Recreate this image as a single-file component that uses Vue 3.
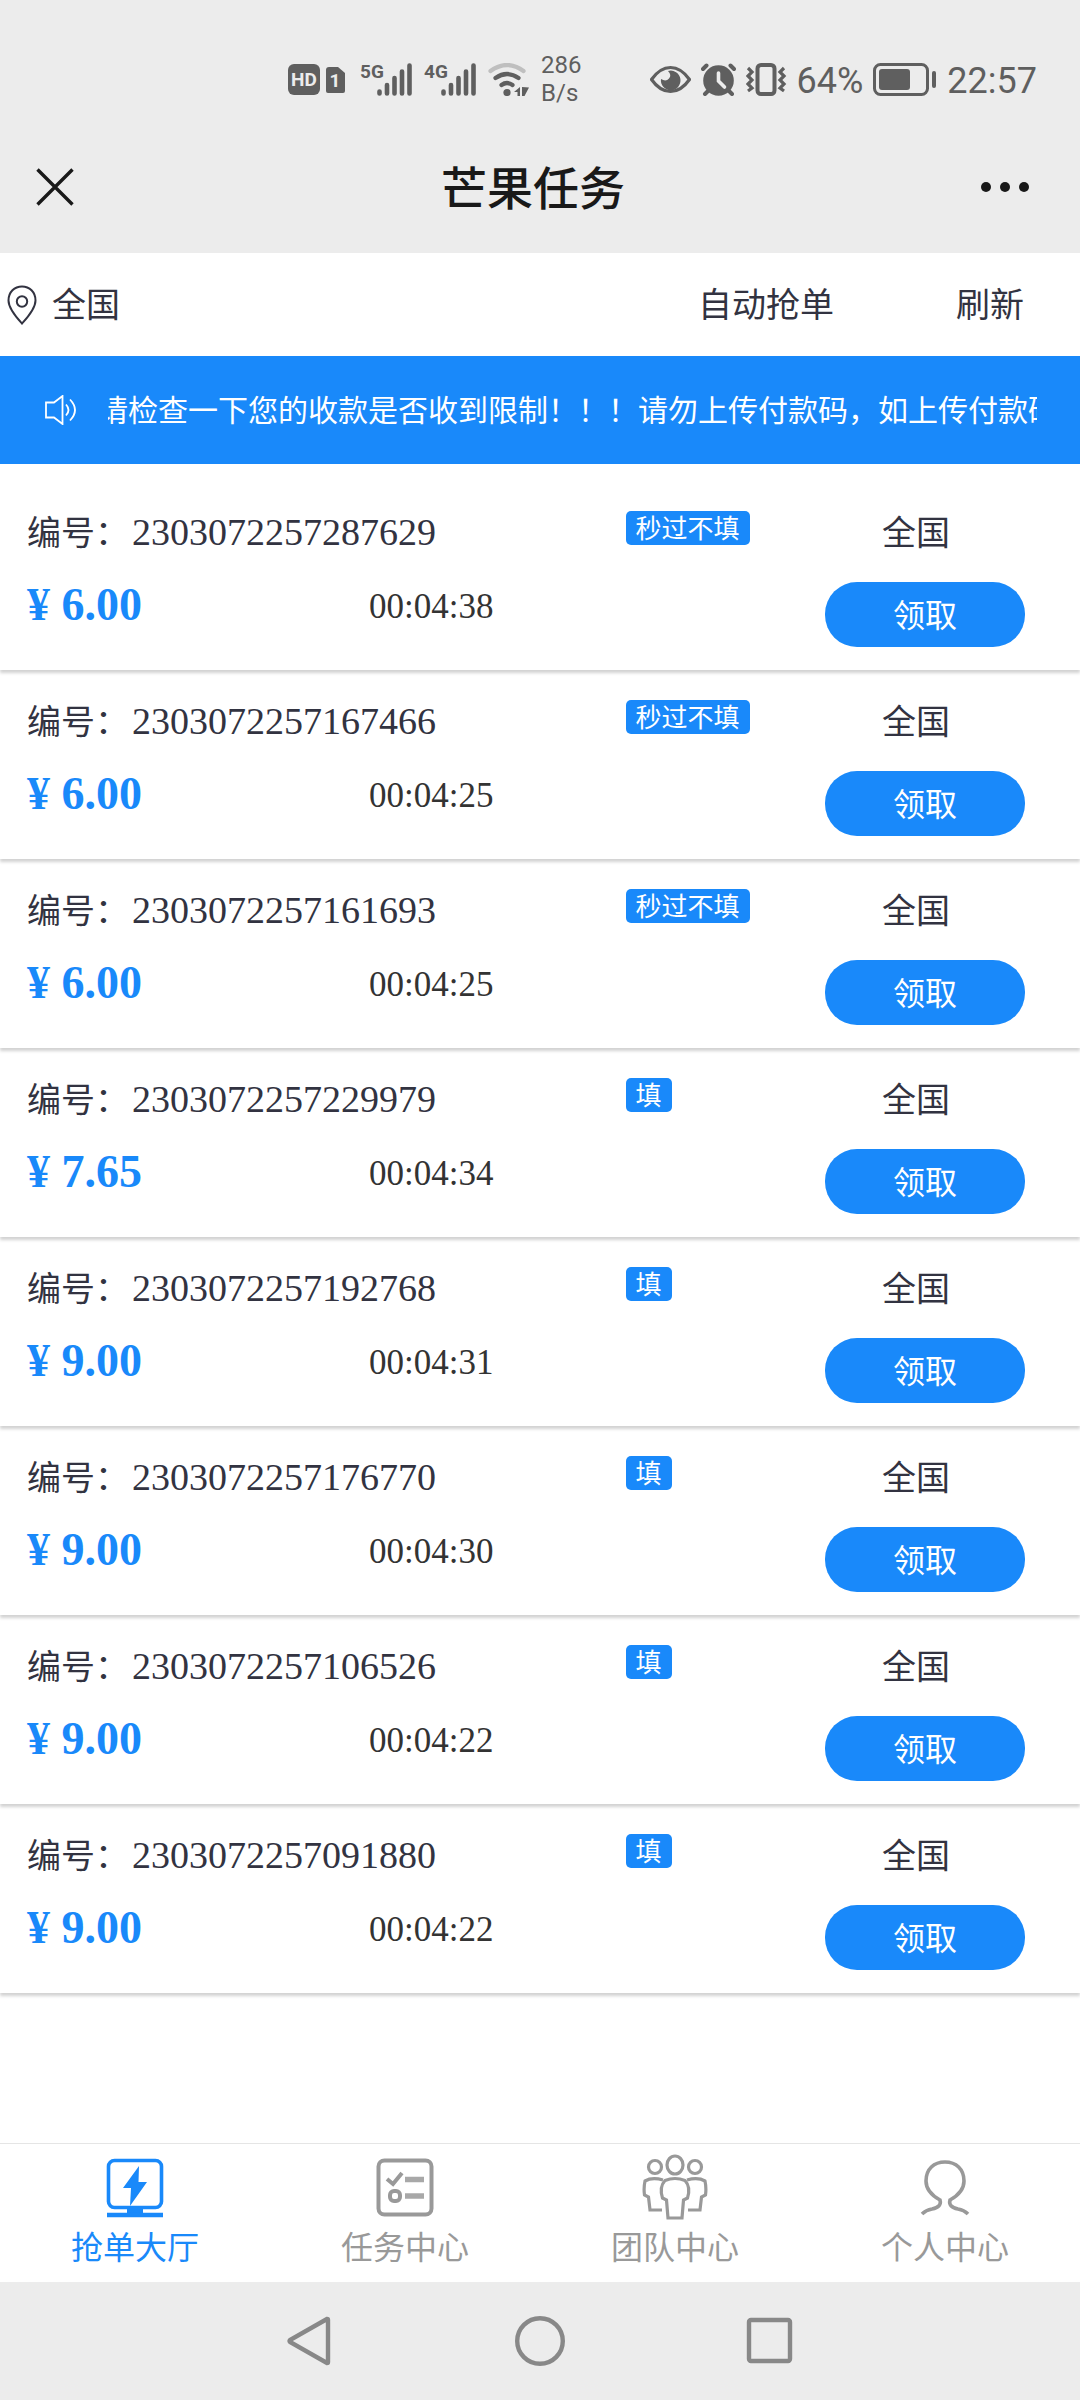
<template>
  <div class="page">
    <div class="status-bar">
      <div class="status-group">
        <svg width="60" height="33" viewBox="0 0 60 33">
          <rect x="0" y="1" width="32" height="31" rx="6" fill="#5f5f5f" />
          <text x="16" y="23" text-anchor="middle" class="hd-text">HD</text>
          <path d="M41 4h9l7 6v18q0 2-2 2H40q-2 0-2-2V7q0-3 3-3z" fill="#5f5f5f" />
          <text x="47" y="24" text-anchor="middle" class="hd-text">1</text>
        </svg>
        <svg v-for="net in ['5G', '4G']" :key="net" width="52" height="41" viewBox="0 -4 52 41">
          <text x="0" y="15" class="net-text">{{ net }}</text>
          <path d="M19.500 28.500v2M27 22v8.500M34.500 15v15.500M42 8.500v22M49.500 2.500v28" stroke="#5f5f5f" stroke-width="4.600" stroke-linecap="round" />
        </svg>
        <svg width="41" height="33" viewBox="0 0 41 33" fill="none" stroke-width="4.200" stroke-linecap="round">
          <path d="M2.500 8Q19 -4 35.500 8" stroke="#bfbfbf" />
          <path d="M7.500 15Q19 7 30.500 15" stroke="#5f5f5f" />
          <path d="M13.500 22Q19 18 24.500 22" stroke="#5f5f5f" />
          <circle cx="19" cy="29.500" r="3.600" fill="#5f5f5f" />
          <path d="M32 24v9h-2.500v-4H26zM34 24l7 .5-4.500 8.500H34z" fill="#5f5f5f" />
        </svg>
        <div class="net-speed">286<br>B/s</div>
      </div>
      <div class="status-group">
        <svg width="41" height="33" viewBox="0 0 41 33">
          <path d="M1.500 16.500Q10 4.500 20.500 4.500T39.500 16.500Q31 28.500 20.500 28.500T1.500 16.500z" fill="none" stroke="#5f5f5f" stroke-width="3.200" stroke-linejoin="round" />
          <path d="M18 8a9.800 9.800 0 1 1-7 8q5 3 8-.5t-1-7.500z" fill="#5f5f5f" />
        </svg>
        <svg width="35" height="33" viewBox="0 0 35 33">
          <path d="M2 6l3.500-3.500M33 6l-3.500-3.500M7 28l-3 3M28 28l3 3" stroke="#5f5f5f" stroke-width="4" stroke-linecap="round" />
          <circle cx="17.500" cy="17.500" r="15.300" fill="#5f5f5f" />
          <path d="M17.500 10v8l6 6" fill="none" stroke="#ececec" stroke-width="3.600" stroke-linecap="round" />
        </svg>
        <svg width="41" height="33" viewBox="0 0 41 33" fill="none" stroke="#5f5f5f">
          <rect x="11.500" y="2" width="17" height="29" rx="3.500" stroke-width="4" />
          <path d="M2 5l4 4-4 4 4 4-4 4 4 4-4 3M38 5l-4 4 4 4-4 4 4 4-4 4 4 3" stroke-width="3.200" />
        </svg>
        <span class="status-text">64%</span>
        <svg width="64" height="33" viewBox="0 0 64 33">
          <rect x="1.500" y="1.500" width="53" height="30" rx="6" fill="none" stroke="#5f5f5f" stroke-width="3" />
          <rect x="6" y="6" width="31" height="21" rx="3" fill="#5f5f5f" />
          <path d="M61 10v13" stroke="#5f5f5f" stroke-width="4" stroke-linecap="round" />
        </svg>
        <span class="status-text">22:57</span>
      </div>
    </div>

    <header class="nav-bar">
      <button class="icon-button" aria-label="关闭">
        <svg width="38" height="38" viewBox="0 0 38 38">
          <path d="M1.500 1.500l35 35M36.500 1.500l-35 35" stroke="#191919" stroke-width="3.400" />
        </svg>
      </button>
      <h1>芒果任务</h1>
      <button class="icon-button" aria-label="更多">
        <svg width="50" height="12" viewBox="0 0 50 12" fill="#191919">
          <circle cx="6" cy="6" r="5" />
          <circle cx="25" cy="6" r="5" />
          <circle cx="44" cy="6" r="5" />
        </svg>
      </button>
    </header>

    <div class="toolbar">
      <button class="tool-button location">
        <svg width="30" height="40" viewBox="0 0 30 40" fill="none" stroke="#323341" stroke-width="2">
          <path d="M15 38.500C10 33 1.500 24 1.500 15.500C1.500 7 7.500 1.500 15 1.500S28.500 7 28.500 15.500C28.500 24 20 33 15 38.500z" />
          <circle cx="15" cy="16.500" r="5.200" />
        </svg>
        <span>全国</span>
      </button>
      <button class="tool-button"><span>自动抢单</span></button>
      <button class="tool-button"><span>刷新</span></button>
    </div>

    <div class="notice">
      <svg width="32" height="30" viewBox="0 0 32 30" fill="none" stroke="#fff" stroke-width="1.800">
        <path d="M1 7.500h8L17.500 1v28L9 22.500H1z" />
        <path d="M21 9.500Q26 15 21 20.500M25 4.500Q35 15 25 25.500" />
      </svg>
      <div class="notice-wrap">
        <div class="notice-text">{{ notice }}</div>
      </div>
    </div>

    <ul class="order-list">
      <li v-for="order in orders" :key="order.no" class="order">
        <div class="order-head">
          <div class="order-no">编号：<span>{{ order.no }}</span></div>
          <div class="order-tag"><span>{{ order.tag }}</span></div>
          <div class="order-area">全国</div>
        </div>
        <div class="order-foot">
          <div class="order-price">¥ {{ order.price }}</div>
          <div class="order-time">{{ order.time }}</div>
          <button class="take-button">领取</button>
        </div>
      </li>
    </ul>

    <nav class="tab-bar">
      <a
        v-for="tab in tabs"
        :key="tab.name"
        href="#"
        class="tab"
        :class="{ active: current === tab.name }"
        @click.prevent="current = tab.name"
      >
        <svg width="66" height="66" viewBox="0 0 66 66" fill="none" stroke="currentColor" stroke-width="3.600">
          <template v-if="tab.icon === 'hall'">
            <rect x="6.500" y="6.500" width="53" height="47" rx="6" />
            <path d="M37 12L21 34h8l-1 18L45 28h-8.500z" fill="currentColor" stroke="none" />
            <path d="M25 54h16v6H25z" fill="currentColor" stroke="none" />
            <path d="M5 61h56" stroke-width="4.500" />
          </template>
          <g v-else-if="tab.icon === 'task'" stroke-width="4">
            <rect x="6.500" y="6.500" width="53" height="54" rx="6" />
            <path d="M15 25l6 5 9-11" />
            <rect x="18" y="37" width="10" height="10" rx="4" />
            <path d="M33 25.500h19M33 42h19" stroke-width="5.500" opacity=".85" />
          </g>
          <g v-else-if="tab.icon === 'team'" stroke-width="3.200">
            <ellipse cx="33" cy="11" rx="8" ry="9" />
            <circle cx="13" cy="13" r="6.500" />
            <circle cx="53" cy="13" r="6.500" />
            <path d="M26 64L24.500 46l-4-2Q17 33 23 26.500q10-4 20 0Q49 33 45.500 44l-4 2L40 64z" />
            <path d="M21 26Q10 23 3 27q-1.500 7-.5 14l4 2L8 56h12M45 26q11-3 18 1 1.500 7 .5 14l-4 2L58 56H46" />
          </g>
          <path v-else d="M10 60q4-4 10-5 10-2 8-9c-9-5-14-12-14-19C14 15 22 8 33 8s19 7 19 19c0 7-5 14-14 19q-2 7 8 9 6 1 10 5" />
        </svg>
        <span>{{ tab.name }}</span>
      </a>
    </nav>

    <div class="system-nav">
      <button aria-label="返回">
        <svg width="50" height="50" viewBox="0 0 50 50">
          <path d="M42 3L5 24Q4 25 5 26L42 47Q43 47 43 46V4Q43 3 42 3z" />
        </svg>
      </button>
      <button aria-label="主页">
        <svg width="50" height="50" viewBox="0 0 50 50">
          <circle cx="25" cy="25" r="22.800" />
        </svg>
      </button>
      <button aria-label="最近">
        <svg width="50" height="50" viewBox="0 0 50 50">
          <rect x="4" y="4" width="41" height="41" rx="2" />
        </svg>
      </button>
    </div>
  </div>
</template>

<script setup>
import { ref } from 'vue';

const notice = '请检查一下您的收款是否收到限制！！！请勿上传付款码，如上传付款码';

const orders = ref([
  { no: '2303072257287629', price: '6.00', time: '00:04:38', tag: '秒过不填' },
  { no: '2303072257167466', price: '6.00', time: '00:04:25', tag: '秒过不填' },
  { no: '2303072257161693', price: '6.00', time: '00:04:25', tag: '秒过不填' },
  { no: '2303072257229979', price: '7.65', time: '00:04:34', tag: '填' },
  { no: '2303072257192768', price: '9.00', time: '00:04:31', tag: '填' },
  { no: '2303072257176770', price: '9.00', time: '00:04:30', tag: '填' },
  { no: '2303072257106526', price: '9.00', time: '00:04:22', tag: '填' },
  { no: '2303072257091880', price: '9.00', time: '00:04:22', tag: '填' }
]);

const tabs = [
  { name: '抢单大厅', icon: 'hall' },
  { name: '任务中心', icon: 'task' },
  { name: '团队中心', icon: 'team' },
  { name: '个人中心', icon: 'user' }
];

const current = ref('抢单大厅');
</script>

<style>
body {
  margin: 0;
  background: #fff;
}
</style>

<style scoped>
.page {
  display: flex;
  flex-direction: column;
  min-height: 100vh;
  font-family: "Noto Sans CJK SC", sans-serif;
  color: #323341;
}

button {
  padding: 0;
  border: none;
  background: none;
  font-family: inherit;
  color: inherit;
  cursor: pointer;
}

svg {
  display: block;
  flex-shrink: 0;
}

/* status bar */
.status-bar {
  display: flex;
  justify-content: flex-end;
  align-items: center;
  gap: 68px;
  padding: 51px 43px 18px 0;
  background: #ececec;
  font-family: Roboto, sans-serif;
  color: #5f5f5f;
}

.status-group {
  display: flex;
  align-items: center;
  gap: 12px;
}

.status-group:last-child {
  gap: 10px;
}

.net-speed {
  font-size: 24px;
  line-height: 28px;
}

.status-text {
  padding-top: 4px;
  font-size: 36px;
  line-height: 40px;
}

.hd-text {
  font: bold 19px Roboto, sans-serif;
  fill: #ececec;
}

.net-text {
  font: bold 19px "Liberation Sans Narrow", Roboto, sans-serif;
  fill: #5f5f5f;
}

/* title bar */
.nav-bar {
  display: flex;
  align-items: center;
  height: 128px;
  padding: 0 50px 0 36px;
  background: #ececec;
}

.icon-button {
  width: 50px;
  padding-bottom: 4px;
}

h1 {
  flex: 1;
  margin: 0;
  padding-bottom: 8px;
  text-align: center;
  font-size: 46px;
  line-height: 60px;
  font-weight: 500;
  color: #191919;
}

/* toolbar */
.toolbar {
  display: flex;
  align-items: center;
  gap: 122px;
  height: 103px;
  padding: 0 56px 0 7px;
}

.tool-button {
  font-size: 34px;
  line-height: 44px;
}

.tool-button span {
  display: block;
  padding-bottom: 4px;
}

.location {
  display: flex;
  align-items: center;
  gap: 15px;
  margin-right: auto;
}

/* notice */
.notice {
  display: flex;
  align-items: center;
  gap: 31px;
  height: 108px;
  padding: 0 43px 0 45px;
  background: #1989fa;
  color: #fff;
}

.notice-wrap {
  flex: 1;
  min-width: 0;
  overflow: hidden;
}

.notice-text {
  margin-left: -10px;
  padding-bottom: 4px;
  white-space: nowrap;
  font-size: 30px;
  line-height: 44px;
}

/* orders */
.order-list {
  flex: 1;
  margin: 0;
  padding: 17px 0 0;
  list-style: none;
}

.order {
  padding: 28px 55px 23px 27px;
  box-shadow: 0 3px 3px rgba(0, 0, 0, 0.18);
}

.order-head {
  display: grid;
  grid-template-columns: 3fr 1fr 200px;
  align-items: start;
  margin-bottom: 29px;
  font-size: 34px;
  line-height: 44px;
}

.order-no span {
  margin-left: 3px;
  font-family: "Liberation Serif", serif;
  font-size: 38px;
  line-height: 1;
}

.order-tag span {
  display: block;
  width: fit-content;
  margin-top: 2px;
  padding: 0 10px 2px;
  border-radius: 5px;
  background: #1989fa;
  color: #fff;
  font-size: 26px;
  line-height: 32px;
  white-space: nowrap;
}

.order-area {
  padding-right: 18px;
  text-align: center;
}

.order-foot {
  display: grid;
  grid-template-columns: 3fr 4fr 200px;
  align-items: start;
  font-family: "Liberation Serif", serif;
}

.order-price {
  font-size: 46px;
  line-height: 46px;
  font-weight: 700;
  color: #1989fa;
}

.order-time {
  font-size: 35px;
  line-height: 50px;
  color: #333;
}

.take-button {
  height: 65px;
  padding-bottom: 4px;
  border-radius: 32px;
  background: #1989fa;
  color: #fff;
  font-family: "Noto Sans CJK SC", sans-serif;
  font-size: 32px;
}

/* bottom tabs */
.tab-bar {
  display: flex;
  border-top: 1px solid #e5e5e5;
  background: #fff;
}

.tab {
  flex: 1;
  display: flex;
  flex-direction: column;
  align-items: center;
  gap: 9px;
  padding: 10px 0 21px;
  font-size: 32px;
  line-height: 32px;
  color: #999;
  text-decoration: none;
}

.tab.active {
  color: #1989fa;
}

.system-nav {
  display: flex;
  justify-content: center;
  align-items: center;
  gap: 180px;
  height: 118px;
  background: #ececec;
}

.system-nav svg {
  fill: none;
  stroke: #888;
  stroke-width: 4.4;
}
</style>
